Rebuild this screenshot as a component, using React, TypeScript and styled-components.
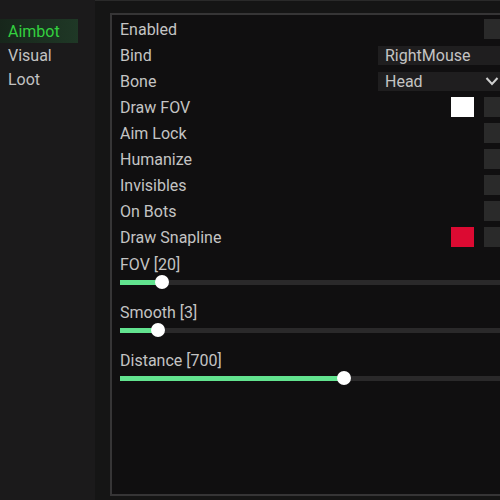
import React from "react";
import styled, { createGlobalStyle } from "styled-components";

const Global = createGlobalStyle`
  html, body { margin: 0; padding: 0; background: #151515; }
  body { font-family: Roboto, "Noto Sans", "Liberation Sans", sans-serif; }
`;

const Root = styled.div`
  width: 500px;
  height: 500px;
  display: flex;
  overflow: hidden;
  background: #151515;
`;

const Sidebar = styled.nav`
  width: 95px;
  flex: none;
  background: #1b1a1b;
  padding-top: 19px;
  display: flex;
  flex-direction: column;
`;

const NavItem = styled.div<{ $active?: boolean }>`
  width: 78px;
  height: 24px;
  box-sizing: border-box;
  padding-left: 8px;
  display: flex;
  align-items: center;
  font-size: 16px;
  color: ${(p) => (p.$active ? "#33d13f" : "#c2c2c2")};
  background: ${(p) =>
    p.$active ? "linear-gradient(90deg, #17261b, #1f3826)" : "transparent"};
`;

const Main = styled.main`
  flex: 1;
  border-top: 1px solid #2a2a2a;
  padding: 12px 0 0 15px;
  overflow: hidden;
`;

const Panel = styled.section`
  width: 408px;
  height: 483px;
  box-sizing: border-box;
  border: 2px solid #363536;
  background: #100f10;
  padding: 1px 12px 0 8px;
  display: flex;
  flex-direction: column;
`;

const Row = styled.div`
  height: 26px;
  display: flex;
  align-items: center;
  gap: 10px;
`;

const Label = styled.span`
  flex: 1;
  font-size: 16px;
  color: #c4c4c4;
  white-space: nowrap;
`;

const Check = styled.div`
  width: 20px;
  height: 20px;
  background: #2a2a2a;
  flex: none;
`;

const Swatch = styled.div<{ $color: string }>`
  width: 23px;
  height: 20px;
  background: ${(p) => p.$color};
  flex: none;
`;

const Field = styled.div`
  width: 126px;
  height: 19px;
  box-sizing: border-box;
  padding: 0 4px 0 7px;
  background: #1f1e1f;
  display: flex;
  align-items: center;
  justify-content: space-between;
  font-size: 16px;
  color: #c4c4c4;
  flex: none;
`;

const Chevron = styled.svg`
  width: 14px;
  height: 10px;
  margin-right: 1px;
`;

const Sliders = styled.div`
  margin-top: 6px;
  display: flex;
  flex-direction: column;
  gap: 14px;
`;

const SliderBlock = styled.div`
  display: flex;
  flex-direction: column;
`;

const SliderLabel = styled.div`
  height: 18px;
  line-height: 18px;
  font-size: 16px;
  color: #c4c4c4;
`;

const TrackRow = styled.div`
  height: 16px;
  display: flex;
  align-items: center;
`;

const Track = styled.div`
  height: 5px;
  background: #2a292a;
  position: relative;
`;

const Fill = styled.div`
  height: 100%;
  background: #62e38f;
`;

const Thumb = styled.div`
  position: absolute;
  top: 50%;
  width: 14px;
  height: 14px;
  border-radius: 50%;
  background: #ffffff;
  transform: translate(-50%, -50%);
`;

const TRACK_W = 380;

function Slider({ label, value, max }: { label: string; value: number; max: number }) {
  const px = (value / max) * TRACK_W;
  return (
    <SliderBlock>
      <SliderLabel>
        {label} [{value}]
      </SliderLabel>
      <TrackRow>
        <Track style={{ width: TRACK_W }}>
          <Fill style={{ width: px }} />
          <Thumb style={{ left: px }} />
        </Track>
      </TrackRow>
    </SliderBlock>
  );
}

const toggles: { name: string; color?: string }[] = [
  { name: "Draw FOV", color: "#ffffff" },
  { name: "Aim Lock" },
  { name: "Humanize" },
  { name: "Invisibles" },
  { name: "On Bots" },
  { name: "Draw Snapline", color: "#dc0a32" },
];

export default function App() {
  return (
    <Root>
      <Global />
      <Sidebar>
        <NavItem $active>Aimbot</NavItem>
        <NavItem>Visual</NavItem>
        <NavItem>Loot</NavItem>
      </Sidebar>
      <Main>
        <Panel>
          <Row>
            <Label>Enabled</Label>
            <Check />
          </Row>
          <Row>
            <Label>Bind</Label>
            <Field>RightMouse</Field>
          </Row>
          <Row>
            <Label>Bone</Label>
            <Field>
              Head
              <Chevron viewBox="0 0 14 10">
                <path d="M1.5 2 L7 8 L12.5 2" fill="none" stroke="#d0d0d0" strokeWidth="2" />
              </Chevron>
            </Field>
          </Row>
          {toggles.map((t) => (
            <Row key={t.name}>
              <Label>{t.name}</Label>
              {t.color && <Swatch $color={t.color} />}
              <Check />
            </Row>
          ))}
          <Sliders>
            <Slider label="FOV" value={20} max={180} />
            <Slider label="Smooth" value={3} max={30} />
            <Slider label="Distance" value={700} max={1190} />
          </Sliders>
        </Panel>
      </Main>
    </Root>
  );
}
